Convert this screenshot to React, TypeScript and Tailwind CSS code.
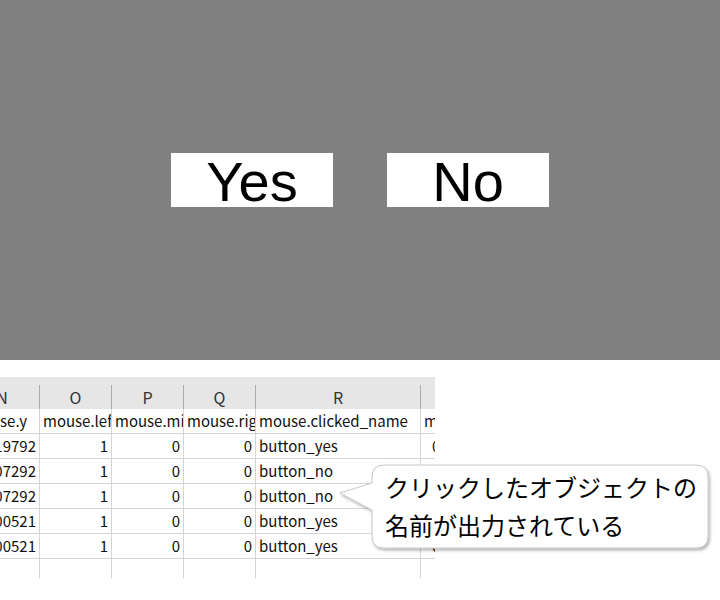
const cols = [
  { letter: "N", w: "w-[75px] -ml-[35px]", head: "mouse.y", align: "left" },
  { letter: "O", w: "w-[72px]", head: "mouse.left", align: "right" },
  { letter: "P", w: "w-[72px]", head: "mouse.middle", align: "right" },
  { letter: "Q", w: "w-[72px]", head: "mouse.right", align: "right" },
  { letter: "R", w: "w-[165px]", head: "mouse.clicked_name", align: "left" },
  { letter: "S", w: "w-[100px]", head: "mouse.time", align: "left" },
];

const rows = [
  ["0.419792", "1", "0", "0", "button_yes", "0.5"],
  ["0.307292", "1", "0", "0", "button_no", "0.4"],
  ["0.307292", "1", "0", "0", "button_no", "0.4"],
  ["0.400521", "1", "0", "0", "button_yes", "0.3"],
  ["0.400521", "1", "0", "0", "button_yes", "0.3"],
  ["", "", "", "", "", ""],
];

function Cell({ w, children, right, pad }: { w: string; children?: React.ReactNode; right?: boolean; pad?: boolean }) {
  return (
    <div
      className={`${w} shrink-0 h-[25px] border-r border-b border-[#d4d4d4] overflow-hidden whitespace-nowrap ${
        pad ? "pl-[11px] pr-[3px]" : "px-[3px]"
      } flex items-center ${right ? "justify-end" : "justify-start"}`}
    >
      {children}
    </div>
  );
}

export default function App() {
  return (
    <div className="w-[720px] h-[600px] bg-white relative overflow-hidden">
      <div className="h-[360px] bg-[#808080] flex items-center justify-center gap-[54px]">
        {["Yes", "No"].map((t) => (
          <div
            key={t}
            className="w-[162px] h-[54px] bg-white flex items-center justify-center text-black text-[56px] leading-none font-['Liberation_Sans',Arial,sans-serif]"
          >
            <span className="pt-[3px]">{t}</span>
          </div>
        ))}
      </div>

      <div className="mt-[17px] w-[435px] h-[201px] overflow-hidden text-[15px] text-[#111] font-['Noto_Sans_CJK_JP',sans-serif]">
        <div className="flex bg-[#e6e6e6] pt-[8px]">
          {cols.map((c) => (
            <div
              key={c.letter}
              className={`${c.w} shrink-0 h-[24px] border-r border-[#ababab] flex items-center justify-center text-[16px] text-[#333]`}
            >
              {c.letter}
            </div>
          ))}
        </div>
        <div className="flex">
          {cols.map((c) => (
            <Cell key={c.letter} w={c.w}>
              {c.head}
            </Cell>
          ))}
        </div>
        {rows.map((r, i) => (
          <div key={i} className="flex">
            {r.map((v, j) => (
              <Cell key={j} w={cols[j].w} right={cols[j].align === "right" || j === 0} pad={j === 5}>
                {v}
              </Cell>
            ))}
          </div>
        ))}
      </div>

      <div className="absolute left-[335px] top-[458px] w-[380px] h-[100px]">
        <svg className="absolute inset-0" width="380" height="100" viewBox="0 0 380 100">
          <defs>
            <filter id="sh" x="-10%" y="-10%" width="120%" height="130%">
              <feDropShadow dx="1.5" dy="2" stdDeviation="1.8" floodColor="#000" floodOpacity="0.3" />
            </filter>
          </defs>
          <path
            d="M49 7 H361 Q373 7 373 19 V78 Q373 90 361 90 H49 Q37 90 37 78 V52 L5 35 L37 25 V19 Q37 7 49 7 Z"
            fill="#fff"
            stroke="#c8c8c8"
            strokeWidth="1"
            filter="url(#sh)"
          />
        </svg>
        <div className="absolute left-[50px] top-[10px] text-[24px] leading-[38px] text-black font-['Noto_Sans_CJK_JP',sans-serif] whitespace-nowrap">
          <div>クリックしたオブジェクトの</div>
          <div>名前が出力されている</div>
        </div>
      </div>
    </div>
  );
}
